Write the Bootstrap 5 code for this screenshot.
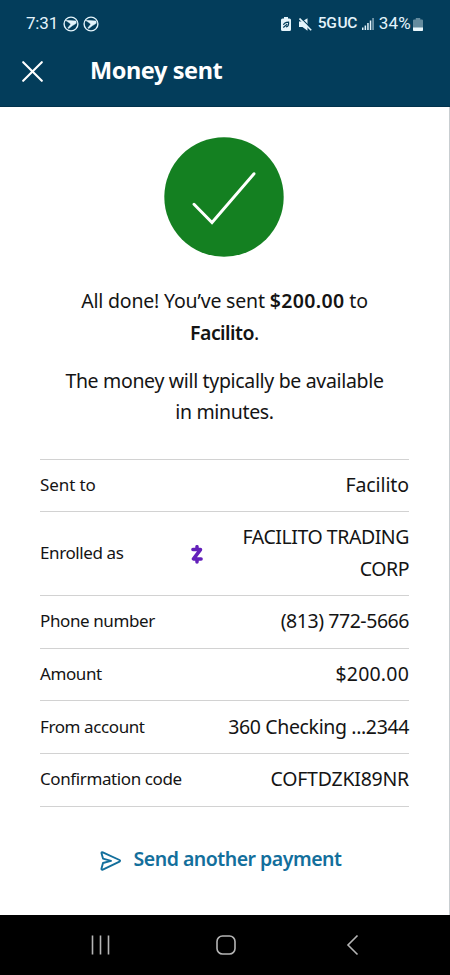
<!DOCTYPE html>
<html lang="en">
<head>
<meta charset="utf-8">
<meta name="viewport" content="width=device-width, initial-scale=1">
<title>Money sent</title>
<link href="https://cdn.jsdelivr.net/npm/bootstrap@5.3.0/dist/css/bootstrap.min.css" rel="stylesheet">
<style>
body{font-family:"Noto Sans","Open Sans",sans-serif;color:#141414;background:#fff;width:450px;height:975px;overflow:hidden}
svg{display:block;flex:none}
.app-head{height:107px;background:#033d5b;color:#fff;border-bottom:1px solid #02324c}
.status{height:46px;padding:2px 26px 0 26px;font-family:Roboto,sans-serif;font-size:17px;color:#e4f4fb}
.clock{width:37px;letter-spacing:-.2px}
.net{font-size:15.5px;font-weight:500;letter-spacing:-.5px;word-spacing:-2px;margin-left:6px;margin-right:5px}
.pct{margin-left:5px;letter-spacing:.2px;margin-right:2px}
.batt{margin-right:1px}
.title-bar{height:48px;padding-left:22px}
.title-bar h1{font-size:23.5px;font-weight:700;letter-spacing:-.42px;margin-left:47px;line-height:32px;margin-top:-1px}
.title-bar svg{margin-top:2px}
.receipt{height:808px;padding:29.5px 40px 0 39px;border-right:1px solid #c9ced1}
.msg{font-size:19.5px;line-height:31.5px;white-space:nowrap;margin-bottom:16.5px;padding-left:1px}
.done-text{letter-spacing:-.18px;margin-top:28.5px}
.done-text b{font-weight:600}
.sum{letter-spacing:.35px}
.payee{letter-spacing:-.55px}
.eta-text{letter-spacing:-.33px}
.rows{margin-top:31px;margin-left:1px;border-top:1px solid #d2d2d2}
.line-item{border-bottom:1px solid #d2d2d2;padding:9.1px 0 10.9px;line-height:31.6px;white-space:nowrap}
.line-item dt{font-size:17px;font-weight:400;letter-spacing:-.4px}
.line-item dd{font-size:19.5px;letter-spacing:-.45px}
.line-item .ls-0{letter-spacing:-.1px}
.line-item .ls-wide{letter-spacing:.2px}
.line-item .ls-acct{letter-spacing:-.37px}
.line-item .ls-code{letter-spacing:-.23px}
.zel{margin-left:68px;margin-top:3px}
.again{color:#136f9c;font-size:19.5px;font-weight:600;letter-spacing:-.5px;line-height:30px;margin-top:37.5px;padding-right:7px;white-space:nowrap}
.again svg{margin-right:12px;margin-top:3px}
.sys-nav{height:60px;background:#000}
</style>
</head>
<body class="d-flex flex-column">
<header class="app-head flex-shrink-0">
  <div class="status d-flex align-items-center">
    <span class="clock">7:31</span>
    <svg width="16" height="16" viewBox="0 0 16 16"><circle cx="8" cy="8" r="6.900" fill="none" stroke="#e4f4fb" stroke-width="1.400"/><path d="M2.500 4.300 13 5 13.200 7.300 9.200 9.800 5.800 12.500 4.800 12 7.600 8.600 7 7.200z" fill="#e4f4fb" stroke="#e4f4fb" stroke-width=".5"/></svg>
    <svg class="ms-1" width="16" height="16" viewBox="0 0 16 16"><circle cx="8" cy="8" r="6.900" fill="none" stroke="#e4f4fb" stroke-width="1.400"/><path d="M2.500 4.300 13 5 13.200 7.300 9.200 9.800 5.800 12.500 4.800 12 7.600 8.600 7 7.200z" fill="#e4f4fb" stroke="#e4f4fb" stroke-width=".5"/></svg>
    <div class="d-flex align-items-center ms-auto">
      <svg width="10" height="14" viewBox="0 0 10 14"><path d="M3 0h4v1.500h1.500Q10 1.500 10 3v9.500Q10 14 8.500 14h-7Q0 14 0 12.500V3Q0 1.500 1.500 1.500H3z" fill="#e4f4fb"/><path d="M2.300 10.500 6.200 7.300M2.600 8Q3 5.400 7.600 5.200 8 9.500 5 9.900" fill="none" stroke="#033d5b" stroke-width="1.200"/></svg>
      <svg class="ms-2" width="13" height="13" viewBox="0 0 13 13"><path d="M0 3.500h3l5.500-3.300v12.500L3.500 9H0z" fill="#e4f4fb"/><path d="M1.800 0 13 11.200" stroke="#033d5b" stroke-width="1.200"/><path d="m.5 .5 11.700 11.700" stroke="#e4f4fb" stroke-width="1.600"/></svg>
      <span class="net">5G UC</span>
      <svg width="12" height="12" viewBox="0 0 12 12" fill="#e4f4fb"><path d="M0 9.500h1.500V12H0zM2.600 7.500h1.500V12H2.600zM5.200 5h1.500v7H5.200zM7.800 2.500h1.500V12H7.800z"/><path d="M10.300 0h1.500v12h-1.500z" opacity=".6"/></svg>
      <span class="pct">34%</span>
      <svg class="batt" width="10" height="13" viewBox="0 0 9 13" preserveAspectRatio="none"><path d="M2.500 0h4v1.500H8q1 0 1 1V12q0 1-1 1H1q-1 0-1-1V2.500q0-1 1-1h1.500z" fill="#648b9e"/><path d="M0 9.500h9V12q0 1-1 1H1q-1 0-1-1z" fill="#e9f7fc"/></svg>
    </div>
  </div>
  <div class="title-bar d-flex align-items-center">
    <svg width="21" height="21" viewBox="0 0 21 21"><path d="m1.200 1.200 18.600 18.600M19.800 1.200 1.200 19.800" stroke="#fff" stroke-width="2.100" stroke-linecap="round"/></svg>
    <h1 class="mb-0">Money sent</h1>
  </div>
</header>
<main class="receipt flex-shrink-0">
  <svg class="mx-auto" width="120" height="120" viewBox="0 0 120 120"><circle cx="60" cy="60" r="59.700" fill="#148021"/><path d="M30 67.300 48 85.500 90 36.700" fill="none" stroke="#fff" stroke-width="2.900" stroke-linecap="round"/></svg>
  <p class="msg done-text text-center">All done! You’ve sent <b class="sum">$200.00</b> to<br><b class="payee">Facilito</b>.</p>
  <p class="msg eta-text text-center mb-0">The money will typically be available<br>in minutes.</p>
  <dl class="rows mb-0">
    <div class="line-item d-flex align-items-center justify-content-between"><dt class="ls-0">Sent to</dt><dd class="ls-0 mb-0">Facilito</dd></div>
    <div class="line-item d-flex align-items-center"><dt>Enrolled as</dt>
      <svg class="zel" width="12" height="19" viewBox="0 0 12 19"><path d="M1.900 4.600h7.600L2.500 13.900h7.600M6 1.700v2.500M6 14.500v2.500" fill="none" stroke="#6320ba" stroke-width="3.500" stroke-linejoin="round" stroke-linecap="round"/></svg>
      <dd class="mb-0 ms-auto text-end">FACILITO TRADING<br>CORP</dd></div>
    <div class="line-item d-flex align-items-center justify-content-between"><dt>Phone number</dt><dd class="mb-0">(813) 772-5666</dd></div>
    <div class="line-item d-flex align-items-center justify-content-between"><dt>Amount</dt><dd class="ls-wide mb-0">$200.00</dd></div>
    <div class="line-item d-flex align-items-center justify-content-between"><dt>From account</dt><dd class="ls-acct mb-0">360 Checking ...2344</dd></div>
    <div class="line-item d-flex align-items-center justify-content-between"><dt>Confirmation code</dt><dd class="ls-code mb-0">COFTDZKI89NR</dd></div>
  </dl>
  <a href="#" class="again d-flex align-items-center justify-content-center text-decoration-none">
    <svg width="22" height="20" viewBox="0 0 22 20"><path d="M1.500 2.200Q1.400.8 2.800 1.300L19.500 9q1.200.8 0 1.600L2.800 18.600q-1.600.5-1.300-1L3 12l8-2.200L3 7.600z" fill="none" stroke="#136f9c" stroke-width="1.900" stroke-linejoin="round"/></svg>
    <span>Send another payment</span>
  </a>
</main>
<nav class="sys-nav d-flex align-items-center flex-shrink-0">
  <svg width="450" height="60" viewBox="0 0 450 60" fill="none" stroke="#b5b5b5" stroke-width="1.600"><path d="M92.500 20.500v19M100.500 20.500v19M108.500 20.500v19"/><rect x="217" y="21" width="18" height="18" rx="5.500"/><path d="m357.500 20.500-9.500 9.500 9.500 9.500"/></svg>
</nav>
<script src="https://cdn.jsdelivr.net/npm/bootstrap@5.3.0/dist/js/bootstrap.bundle.min.js"></script>
</body>
</html>
